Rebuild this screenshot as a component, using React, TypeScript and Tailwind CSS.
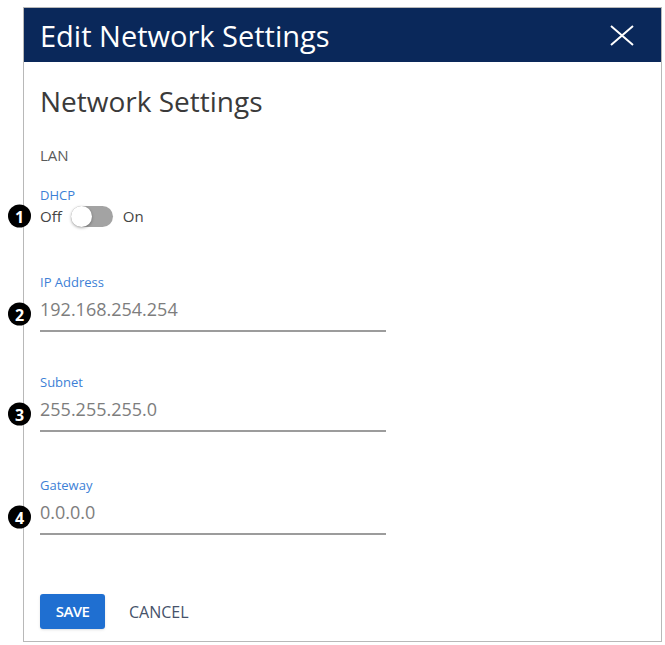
const font = { fontFamily: '"Open Sans", "Noto Sans", sans-serif' };

function Marker({ n }: { n: number }) {
  return (
    <span className="absolute left-[-32px] top-1/2 flex size-[23px] -translate-y-1/2 items-center justify-center rounded-full bg-black text-[16px] font-bold leading-none text-white">
      {n}
    </span>
  );
}

function Field({ label, value, n, top }: { label: string; value: string; n: number; top: string }) {
  return (
    <div className={`w-[346px] ${top}`}>
      <div className="text-[13px] leading-4 text-[#3d7fd6]">{label}</div>
      <div className="relative mt-[8px] border-b-2 border-[#9c9c9c] pb-[10px] text-[18px] leading-[22px] text-[#7d7d7d]">
        <Marker n={n} />
        {value}
      </div>
    </div>
  );
}

export default function App() {
  return (
    <div className="min-h-[645px] bg-white pl-[23px] pt-[7px]" style={font}>
      <div className="flex h-[635px] w-[639px] flex-col border border-[#b8b8b8] bg-white">
        <div className="flex h-[54px] items-center justify-between bg-[#0a285a] pl-[16px] pr-[27px]">
          <h1 className="text-[29px] font-normal leading-none text-white">Edit Network Settings</h1>
          <svg width="24" height="21" viewBox="0 0 24 21" className="mt-[1px]">
            <path d="M1 1 23 20M23 1 1 20" stroke="white" strokeWidth="2" fill="none" />
          </svg>
        </div>

        <div className="flex flex-1 flex-col pl-[16px]">
          <h2 className="mt-[23px] text-[28px] leading-8 text-[#3a3a3a]">Network Settings</h2>
          <div className="mt-[28px] text-[15px] leading-5 text-[#5a5a5a]">LAN</div>

          <div className="mt-[22px] text-[13px] leading-4 text-[#3d7fd6]">DHCP</div>
          <div className="relative mt-[1px] flex h-[24px] items-center text-[15px] text-[#444]">
            <Marker n={1} />
            <span>Off</span>
            <span className="relative ml-[9px] h-[21px] w-[42px] rounded-full bg-[#a3a3a3]">
              <span className="absolute left-0 top-0 size-[21px] rounded-full bg-white shadow-[0_1px_3px_rgba(0,0,0,0.35)]" />
            </span>
            <span className="ml-[10px]">On</span>
          </div>

          <Field n={2} label="IP Address" value="192.168.254.254" top="mt-[46px]" />
          <Field n={3} label="Subnet" value="255.255.255.0" top="mt-[42px]" />
          <Field n={4} label="Gateway" value="0.0.0.0" top="mt-[45px]" />

          <div className="mt-auto mb-[12px] flex items-center gap-[24px]">
            <button className="h-[35px] w-[65px] rounded-[3px] bg-[#1f6fd1] text-[15px] font-semibold tracking-[-0.04em] text-white shadow-sm">
              SAVE
            </button>
            <button className="text-[16px] text-[#46526a]">CANCEL</button>
          </div>
        </div>
      </div>
    </div>
  );
}
